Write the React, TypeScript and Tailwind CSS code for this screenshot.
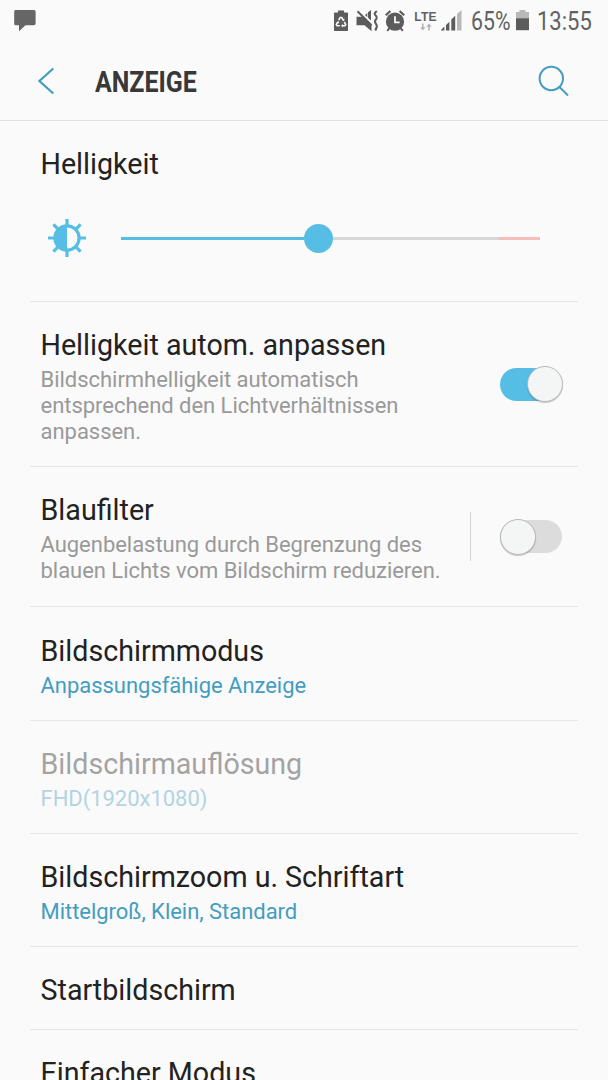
import clsx from 'clsx'
import { useState } from 'react'
import type { ReactNode } from 'react'

interface SettingRowProps {
  title: string
  summary?: ReactNode
  accent?: boolean
  disabled?: boolean
  className: string
  children?: ReactNode
}

function StatusBar() {
  return (
    <div className="flex h-[42px] items-center pl-3.5 pr-4 text-[#616161]">
      <svg className="h-[22px] w-[22px]" viewBox="0 0 22 22" fill="#666">
        <path d="M2 0h18a1.6 1.6 0 0 1 1.6 1.6v12a1.6 1.6 0 0 1-1.6 1.6H11.5L5 21.3v-6.1H2A1.6 1.6 0 0 1 .2 13.6v-12A1.6 1.6 0 0 1 2 0z" />
      </svg>
      <div className="ml-auto flex h-full items-center">
        <svg className="h-[22px] w-[14px]" viewBox="0 0 14 22">
          <path d="M4 .5h6v2h3.2a.8.8 0 0 1 .8.8v17a.8.8 0 0 1-.8.8H.8a.8.8 0 0 1-.8-.8v-17a.8.8 0 0 1 .8-.8H4z" fill="#5c5c5c" />
          <path d="M4.7 10.2 6.2 7.5h1.6l1.5 2.7M10.3 12l1.4 2.4-.8 1.4H8.3M5.8 15.8H3.1l-.8-1.4L3.8 12" fill="none" stroke="#fafafa" strokeWidth="1.6" />
          <path d="m10.4 8.5-.2 2.7-2.5-1.1zM9 13.9v3.6l-2-1.8zM2.4 12.4l2.3-1.4.5 2.6z" fill="#fafafa" />
        </svg>
        <svg className="ml-2 h-[22px] w-[22px]" viewBox="0 0 22 22" fill="#5c5c5c">
          <path d="M.5 6.8H7l8.5 8.5v6l-7-6.1h-8z" />
          <path d="M9 4.9 11.3 3v4.2zM12 7.8V2.2l3-2.2v10.6z" />
          <path d="m1.5 1.3 14 14" stroke="#5c5c5c" strokeWidth="2" />
          <path d="M20.8 1c-2.7 2.3-2.7 2.7-1 4.7 1.6 2 1.2 2.6-.2 4.2-1.2 1.6-.8 2.5.5 4.2 1.2 1.8.9 2.7-.8 6.4" fill="none" stroke="#5c5c5c" strokeWidth="2.1" />
        </svg>
        <svg className="ml-[7px] h-[22px] w-[20px]" viewBox="0 0 20 22">
          <circle cx="10" cy="11.7" r="9.1" fill="#5c5c5c" />
          <path d="M.8 5.2 5.4 1M19.2 5.2 14.6 1" stroke="#5c5c5c" strokeWidth="2.2" />
          <path d="m4.2 18.3-2 2.5M15.8 18.3l2 2.5" stroke="#5c5c5c" strokeWidth="2" />
          <path d="M10 6.3v6h4.7" fill="none" stroke="#fafafa" strokeWidth="1.8" />
        </svg>
        <div className="ml-[9px] flex w-[23px] flex-col items-center">
          <span className="font-['Liberation_Sans',sans-serif] text-[12px] leading-[12px] font-bold tracking-[0.2px]">LTE</span>
          <svg className="h-[8px] w-[12px]" viewBox="0 0 12 8" fill="#b5b5b5">
            <path d="M2 .5h1.6v3.7h2L2.8 7.4 0 4.2h2zM8.2 7.4h1.6V3.7h2L9 .5 6.2 3.7h2z" />
          </svg>
        </div>
        <svg className="ml-1 h-[22px] w-[22px]" viewBox="0 0 22 22" fill="#5c5c5c">
          <path d="M0 20.5v-.6l3.4-3.3v3.9zM5 20.5V15l3.4-3.3v8.8zM10.3 20.5V9.6l3.9-3.9v14.8z" />
          <path d="M16 20.5V4L20.5 0v20.5z" fill="#b8b8b8" />
        </svg>
        <span className="ml-2 w-[39px] text-[25px] leading-none whitespace-nowrap">
          <span className="inline-block origin-left scale-x-[0.85]">65%</span>
        </span>
        <svg className="ml-1.5 h-[22px] w-[13px]" viewBox="0 0 13 22">
          <path d="M3.5 0h6v2H13v6.3H0V2h3.5z" fill="#b8b8b8" />
          <path d="M0 8.2h13v12H0z" fill="#5c5c5c" />
        </svg>
        <span className="ml-2 w-[55px] text-[25px] leading-none whitespace-nowrap">
          <span className="inline-block origin-left scale-x-[0.88]">13:55</span>
        </span>
      </div>
    </div>
  )
}

function Header() {
  return (
    <header className="flex h-[79px] items-center border-b border-[#e0e0e0] pl-[37px] pr-[38px]">
      <button aria-label="Zurück">
        <svg className="h-7 w-[18px]" viewBox="0 0 18 28" fill="none" stroke="#439dc0" strokeWidth="2.2">
          <path d="M16.3 1.5 2.4 14l13.9 12.5" />
        </svg>
      </button>
      <h1 className="mt-0.5 ml-10 w-[104px] text-[29px] leading-none font-bold whitespace-nowrap text-[#383838]">
        <span className="inline-block origin-left scale-x-[0.86]">ANZEIGE</span>
      </h1>
      <button aria-label="Suchen" className="ml-auto">
        <svg className="h-8 w-8" viewBox="0 0 32 32" fill="none" stroke="#439dc0" strokeWidth="2">
          <circle cx="13.3" cy="13.5" r="11.7" />
          <path d="m21.5 22 8.5 8.5" />
        </svg>
      </button>
    </header>
  )
}

function BrightnessIcon() {
  return (
    <svg className="h-[38px] w-[38px]" viewBox="-19 -19 38 38" fill="none" stroke="#56bee4" strokeWidth="3.2">
      <circle r="12.1" />
      <path d="M0-12v24a12 12 0 0 1 0-24z" fill="#56bee4" stroke="none" />
      <path d="M0-19v6M0 13v6M-19 0h6M13 0h6M-13.6-13.6l4.4 4.4M13.6-13.6 9.2-9.2M-13.6 13.6l4.4-4.4M13.6 13.6 9.2 9.2" />
    </svg>
  )
}

function Toggle({ initial, label }: { initial: boolean; label: string }) {
  const [on, setOn] = useState(initial)
  return (
    <button
      role="switch"
      aria-checked={on}
      aria-label={label}
      onClick={() => setOn(!on)}
      className={clsx('flex h-[33px] w-[62px] items-center rounded-full', on ? 'justify-end bg-[#56bee4]' : 'bg-[#dcdcdc]')}
    >
      <span className="-mr-px h-9 w-9 shrink-0 rounded-full border border-[#b8b8b8] bg-[#f4f6f6] shadow-[0_1px_1px_rgba(0,0,0,0.2)]" />
    </button>
  )
}

function SettingRow({ title, summary, accent, disabled, className, children }: SettingRowProps) {
  return (
    <section className={clsx('mx-[30px] flex border-b border-[#e6e6e6] pl-[10.5px]', className)}>
      <div className={clsx('pt-[26px] whitespace-nowrap', disabled && 'opacity-40')}>
        <h2 className="text-[28.65px] leading-[34px] text-[#222]">{title}</h2>
        {summary && (
          <p className={clsx('mt-[5px] text-[22px] leading-[26px] tracking-[-0.03px]', accent ? 'text-[#439dc0]' : 'text-[#999]')}>{summary}</p>
        )}
      </div>
      {children}
    </section>
  )
}

export default function App() {
  return (
    <div className="h-[1080px] w-[608px] overflow-hidden bg-[#fafafa] font-[Roboto,sans-serif]">
      <StatusBar />
      <Header />
      <main>
        <section className="mx-[30px] h-[181px] border-b border-[#e6e6e6] pt-[26px] pl-[10.5px]">
          <h2 className="text-[28.65px] leading-[34px] text-[#222]">Helligkeit</h2>
          <div className="mt-[38px] ml-[7.5px] flex items-center">
            <BrightnessIcon />
            <div className="ml-[35px] flex items-center">
              <div className="h-[3px] w-[183px] bg-[#56bee4]" />
              <div className="h-[29px] w-[29px] rounded-full bg-[#56bee4]" />
              <div className="h-[3px] w-[166px] bg-[#d6d6d6]" />
              <div className="h-[3px] w-[41px] bg-[#f9bcbc]" />
            </div>
          </div>
        </section>

        <SettingRow
          title="Helligkeit autom. anpassen"
          className="h-[165px]"
          summary={<>Bildschirmhelligkeit automatisch<br />entsprechend den Lichtverhältnissen<br />anpassen.</>}
        >
          <div className="mr-4 ml-auto flex items-center">
            <Toggle initial label="Helligkeit autom. anpassen" />
          </div>
        </SettingRow>
        <SettingRow
          title="Blaufilter"
          className="h-[140px] border-[#d8d8d8]"
          summary={<>Augenbelastung durch Begrenzung des<br />blauen Lichts vom Bildschirm reduzieren.</>}
        >
          <div className="mr-4 ml-auto flex items-center">
            <div className="mr-[29px] h-[49px] w-px bg-[#d2d2d2]" />
            <Toggle initial={false} label="Blaufilter" />
          </div>
        </SettingRow>
        <SettingRow title="Bildschirmmodus" summary="Anpassungsfähige Anzeige" accent className="h-[114px] pt-px" />
        <SettingRow title="Bildschirmauflösung" summary="FHD(1920x1080)" accent disabled className="h-[113px]" />
        <SettingRow title="Bildschirmzoom u. Schriftart" summary="Mittelgroß, Klein, Standard" accent className="h-[113px]" />
        <SettingRow title="Startbildschirm" className="h-[83px]" />
        <SettingRow title="Einfacher Modus" className="h-[83px]" />
      </main>
    </div>
  )
}
